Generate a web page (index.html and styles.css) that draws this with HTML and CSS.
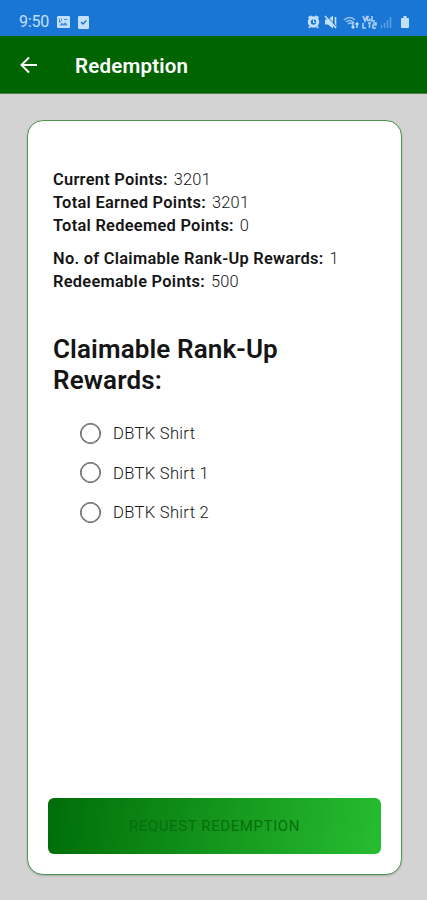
FILE: index.html
```html
<!DOCTYPE html>
<html lang="en">
<head>
<meta charset="utf-8">
<title>Redemption</title>
<link rel="stylesheet" href="styles.css">
</head>
<body>
<div class="status">
  <span class="time">9:50</span>
  <svg class="pic" width="13" height="13" viewBox="0 0 13 13"><rect width="13" height="12" rx="1.2" fill="currentColor"/><path d="M2.500 9.500l2.500-3 1.500 1.500L8.500 6l2 3.500z" fill="#1a76d4" opacity=".75"/><path d="M2.500 2.500v4l2-2V2.500M7 3.500h3.500" fill="none" stroke="#1a76d4" opacity=".75"/></svg>
  <svg class="check" width="11" height="13" viewBox="0 0 11 13"><rect width="11" height="13" rx="1.3" fill="currentColor"/><path d="M3 6l2 2 3.3-3.5" fill="none" stroke="#1a73cf" stroke-width="1.3"/></svg>
  <svg class="system" width="104" height="14" viewBox="0 0 104 14" fill="none" stroke="currentColor">
    <path d="M1.500 3l3-2M8.500 1l3 2M3 11.500l-1 1.500M10 11.500l1 1.500" stroke-width="2"/><circle cx="6.500" cy="7" r="4.200" stroke-width="3"/><path d="M6.500 4.500V7.500h2" stroke-width="1.100"/>
    <path d="M18 4.500h3l5-4v13l-5-4h-3z" fill="currentColor" stroke="none"/><path d="M18 1l11 12M28.500 2v10" stroke-width="1.600"/><path d="M20 1l9 10" stroke="#1a73cf"/>
    <path d="M37 5q5.500-5 11 0M39 7q4-3.500 8 1M41 9q2-2 4 0" stroke-width="1.500" opacity=".75"/><path d="M46 7v6m-1.500-1.500L46 13l1.500-1.500M50 13V8m-1.500 1.500L50 8l1.500 1.500" stroke-width="1.400"/>
    <path d="M56 1l2 5 2-5M62 1.500h-1.500v4H63v-2M65 1v5h3M56 8v5h3M61 8h3M62.500 8v5M66 8h3v2h-3v3h3" stroke-width="1.600" opacity=".85"/>
    <path d="M74.500 10v3M77.500 8v5M80.500 5v8M83.500 2v11" stroke-width="1.500" opacity=".4"/>
    <path d="M95 3h1.500V1h3v2h1.500q1 0 1 1v8q0 1-1 1h-6q-1 0-1-1V4q0-1 1-1z" fill="currentColor" stroke="none"/>
  </svg>
</div>
<header class="bar">
  <svg width="18" height="18" viewBox="0 0 18 18"><path d="M17 9H2M9 1.500L1.500 9 9 16.500" fill="none" stroke="#fff" stroke-width="2"/></svg>
  <h1>Redemption</h1>
</header>
<main class="card">
  <section class="stats">
    <p><b>Current Points:</b> <span>3201</span></p>
    <p><b>Total Earned Points:</b> <span>3201</span></p>
    <p><b>Total Redeemed Points:</b> <span>0</span></p>
    <p class="next"><b>No. of Claimable Rank-Up Rewards:</b> <span>1</span></p>
    <p><b>Redeemable Points:</b> <span>500</span></p>
  </section>
  <h2>Claimable Rank-Up<br>Rewards:</h2>
  <div class="options">
    <label><input type="radio" name="reward"><span>DBTK Shirt</span></label>
    <label><input type="radio" name="reward"><span>DBTK Shirt 1</span></label>
    <label><input type="radio" name="reward"><span>DBTK Shirt 2</span></label>
  </div>
  <button disabled>REQUEST REDEMPTION</button>
</main>
</body>
</html>
```
FILE: styles.css
```css
* { box-sizing: border-box; }
body {
  margin: 0;
  height: 900px;
  display: flex;
  flex-direction: column;
  background: #d3d3d3;
  font-family: Roboto, sans-serif;
  color: #151515;
}
h1, h2, p { margin: 0; }
.status {
  height: 36px;
  flex: none;
  display: flex;
  align-items: center;
  padding: 8px 16px 0 19px;
  background: #1a76d4;
  color: #c3e0fa;
}
.time { width: 38px; font-size: 16px; line-height: 20px; letter-spacing: -.2px; }
.check { margin-left: 8px; }
.system { margin-left: auto; }
.bar {
  height: 58px;
  flex: none;
  display: flex;
  align-items: center;
  padding-left: 20px;
  background: #006400;
  border-bottom: 1px solid #4d804d;
  color: #fff;
}
.bar h1 { margin: 2px 0 0 37px; font-size: 20.5px; font-weight: 600; letter-spacing: .2px; }
.card {
  width: 375px;
  height: 755px;
  margin: 26px 0 0 27px;
  padding: 47px 20px 20px;
  display: flex;
  flex-direction: column;
  background: #fff;
  border: 1px solid #4c954f;
  border-radius: 16px;
  box-shadow: 0 1px 2px #0003;
}
.stats { padding-left: 5px; font-size: 16.4px; line-height: 23px; letter-spacing: .28px; }
.stats b { font-weight: 600; }
.stats span { margin-left: 1.5px; font-weight: 300; letter-spacing: .25px; }
.stats .next { margin-top: 10px; }
h2 { margin: 41px 0 -1px 5px; font-size: 26px; line-height: 31px; font-weight: 600; letter-spacing: .12px; }
.options { margin: 19px 0 0 32px; }
.options label { height: 39.5px; display: flex; align-items: center; font-size: 16.6px; font-weight: 300; letter-spacing: .3px; }
.options input {
  appearance: none;
  width: 21px;
  height: 21px;
  margin: 0 12px 1px 0;
  border: 1px solid #555;
  border-radius: 50%;
  box-shadow: inset 0 0 0 .6px #555;
}
button {
  height: 56px;
  margin-top: auto;
  border: 0;
  border-radius: 6px;
  background: linear-gradient(100deg, #006d08, #27bd31);
  color: #086f0d;
  font: 400 15px Roboto, sans-serif;
  letter-spacing: .6px;
}
```
